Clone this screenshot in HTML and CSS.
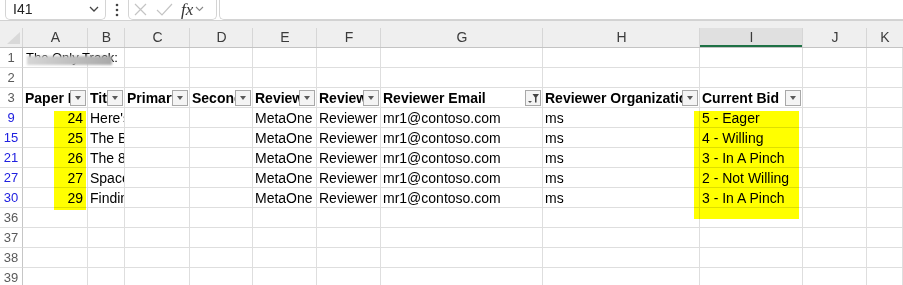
FILE: index.html
```html
<!DOCTYPE html>
<html lang="en">
<head>
    <meta charset="UTF-8">
    <meta name="viewport" content="width=device-width, initial-scale=1.0">
    <title>Reviewer Bids</title>
    <link rel="stylesheet" href="styles.css">
</head>
<body>

<!-- Formula bar -->
<div class="formula-bar">
    <div class="name-box">
        <span>I41</span>
        <svg class="chevron" width="10" height="6" viewBox="0 0 10 6"><path d="M1 1 L5 5 L9 1" fill="none" stroke="#444" stroke-width="1.3"/></svg>
    </div>
    <svg class="bar-dots" width="4" height="14" viewBox="0 0 4 14"><circle cx="2" cy="2" r="1.3"/><circle cx="2" cy="7" r="1.3"/><circle cx="2" cy="12" r="1.3"/></svg>
    <div class="fx-box">
        <svg width="13" height="13" viewBox="0 0 13 13"><path d="M1 1 L12 12 M12 1 L1 12" stroke="#c4c4c4" stroke-width="1.2"/></svg>
        <svg class="check" width="17" height="13" viewBox="0 0 17 13"><path d="M1 7 L6 12 L16 1" fill="none" stroke="#c4c4c4" stroke-width="1.2"/></svg>
        <span class="fx">fx</span>
        <svg width="9" height="6" viewBox="0 0 9 6"><path d="M1 1 L4.5 4.5 L8 1" fill="none" stroke="#888" stroke-width="1.1"/></svg>
    </div>
    <div class="formula-input"></div>
</div>

<!-- Sheet -->
<div class="sheet">
    <div class="corner"><svg width="13" height="12" viewBox="0 0 13 12"><polygon points="13,0 13,12 0,12" fill="#d9d9d9"/></svg></div>
    <div class="col-head"><div class="col-label">A</div></div>
    <div class="col-head"><div class="col-label">B</div></div>
    <div class="col-head"><div class="col-label">C</div></div>
    <div class="col-head"><div class="col-label">D</div></div>
    <div class="col-head"><div class="col-label">E</div></div>
    <div class="col-head"><div class="col-label">F</div></div>
    <div class="col-head"><div class="col-label">G</div></div>
    <div class="col-head"><div class="col-label">H</div></div>
    <div class="col-head"><div class="col-label is-active">I</div></div>
    <div class="col-head"><div class="col-label">J</div></div>
    <div class="col-head"><div class="col-label">K</div></div>

    <!-- row 1 -->
    <div class="row-head">1</div>
    <div class="cell cell-overflow">The Only Track:<span class="blur"></span></div>
    <div class="cell"></div><div class="cell"></div><div class="cell"></div><div class="cell"></div><div class="cell"></div>
    <div class="cell"></div><div class="cell"></div><div class="cell"></div><div class="cell"></div><div class="cell"></div>

    <!-- row 2 -->
    <div class="row-head">2</div>
    <div class="cell"></div><div class="cell"></div><div class="cell"></div><div class="cell"></div><div class="cell"></div><div class="cell"></div>
    <div class="cell"></div><div class="cell"></div><div class="cell"></div><div class="cell"></div><div class="cell"></div>

    <!-- row 3: table headers -->
    <div class="row-head">3</div>
    <div class="cell th"><span class="th-text">Paper ID</span><span class="filter-btn"></span></div>
    <div class="cell th"><span class="th-text">Title</span><span class="filter-btn"></span></div>
    <div class="cell th"><span class="th-text">Primary Subject Area</span><span class="filter-btn"></span></div>
    <div class="cell th"><span class="th-text">Secondary Subject Areas</span><span class="filter-btn"></span></div>
    <div class="cell th"><span class="th-text">Reviewer Name</span><span class="filter-btn"></span></div>
    <div class="cell th"><span class="th-text">Reviewer Type</span><span class="filter-btn"></span></div>
    <div class="cell th"><span class="th-text">Reviewer Email</span>
        <span class="filter-btn is-filtered">
            <svg width="14" height="14" viewBox="0 0 14 14"><path d="M2 10 H6 L4 12 Z" fill="#555"/><path d="M6.5 3 H13 L10.5 6.5 V11.5 H9 V6.5 Z" fill="#444"/></svg>
        </span>
    </div>
    <div class="cell th"><span class="th-text">Reviewer Organization</span><span class="filter-btn"></span></div>
    <div class="cell th"><span class="th-text">Current Bid</span><span class="filter-btn"></span></div>
    <div class="cell"></div><div class="cell"></div>

    <!-- rows 9 .. 30 -->
    <div class="row-head is-filtered">9</div>
    <div class="cell num">24</div><div class="cell">Here's Looking at Data</div><div class="cell"></div><div class="cell"></div>
    <div class="cell">MetaOne</div><div class="cell">Reviewer</div><div class="cell">mr1@contoso.com</div><div class="cell">ms</div>
    <div class="cell">5 - Eager</div><div class="cell"></div><div class="cell"></div>

    <div class="row-head is-filtered">15</div>
    <div class="cell num">25</div><div class="cell">The Best Paper</div><div class="cell"></div><div class="cell"></div>
    <div class="cell">MetaOne</div><div class="cell">Reviewer</div><div class="cell">mr1@contoso.com</div><div class="cell">ms</div>
    <div class="cell">4 - Willing</div><div class="cell"></div><div class="cell"></div>

    <div class="row-head is-filtered">21</div>
    <div class="cell num">26</div><div class="cell">The 8th Wonder</div><div class="cell"></div><div class="cell"></div>
    <div class="cell">MetaOne</div><div class="cell">Reviewer</div><div class="cell">mr1@contoso.com</div><div class="cell">ms</div>
    <div class="cell">3 - In A Pinch</div><div class="cell"></div><div class="cell"></div>

    <div class="row-head is-filtered">27</div>
    <div class="cell num">27</div><div class="cell">Space Travel</div><div class="cell"></div><div class="cell"></div>
    <div class="cell">MetaOne</div><div class="cell">Reviewer</div><div class="cell">mr1@contoso.com</div><div class="cell">ms</div>
    <div class="cell">2 - Not Willing</div><div class="cell"></div><div class="cell"></div>

    <div class="row-head is-filtered">30</div>
    <div class="cell num">29</div><div class="cell">Finding Answers</div><div class="cell"></div><div class="cell"></div>
    <div class="cell">MetaOne</div><div class="cell">Reviewer</div><div class="cell">mr1@contoso.com</div><div class="cell">ms</div>
    <div class="cell">3 - In A Pinch</div><div class="cell"></div><div class="cell"></div>

    <!-- empty rows -->
    <div class="row-head">36</div>
    <div class="cell"></div><div class="cell"></div><div class="cell"></div><div class="cell"></div><div class="cell"></div><div class="cell"></div>
    <div class="cell"></div><div class="cell"></div><div class="cell"></div><div class="cell"></div><div class="cell"></div>
    <div class="row-head">37</div>
    <div class="cell"></div><div class="cell"></div><div class="cell"></div><div class="cell"></div><div class="cell"></div><div class="cell"></div>
    <div class="cell"></div><div class="cell"></div><div class="cell"></div><div class="cell"></div><div class="cell"></div>
    <div class="row-head">38</div>
    <div class="cell"></div><div class="cell"></div><div class="cell"></div><div class="cell"></div><div class="cell"></div><div class="cell"></div>
    <div class="cell"></div><div class="cell"></div><div class="cell"></div><div class="cell"></div><div class="cell"></div>
    <div class="row-head">39</div>
    <div class="cell"></div><div class="cell"></div><div class="cell"></div><div class="cell"></div><div class="cell"></div><div class="cell"></div>
    <div class="cell"></div><div class="cell"></div><div class="cell"></div><div class="cell"></div><div class="cell"></div>

    <!-- highlighter marks drawn over the sheet -->
    <div class="marker marker-ids"></div>
    <div class="marker marker-bids"></div>
</div>

</body>
</html>
```

FILE: styles.css
```css
/* Global styles */

* {
  box-sizing: border-box;
  margin: 0;
  padding: 0;
}

body {
  font-family: "Liberation Sans", Arial, sans-serif;
  font-size: 14px;
  color: #000;
  background-color: #fff;
  width: 903px;
  height: 285px;
  overflow: hidden;
}

/* Formula bar */

.formula-bar {
  display: flex;
  align-items: flex-end;
  height: 20px;
  background-color: #fff;
}

.name-box,
.fx-box,
.formula-input {
  height: 21px;
  border: 1px solid #d4d4d4;
  border-top: none;
  border-radius: 0 0 5px 5px;
  display: flex;
  align-items: center;
}

.name-box {
  width: 101px;
  margin-left: 5px;
  padding: 0 6px 0 7px;
  justify-content: space-between;
  color: #222;
}

.bar-dots {
  fill: #444;
  margin: 0 9px 0 9px;
  align-self: center;
}

.fx-box {
  width: 89px;
  padding-left: 5px;
  gap: 0;
}

.fx-box .check {
  margin-left: 9px;
}

.fx {
  font-family: "Liberation Serif", "Times New Roman", serif;
  font-style: italic;
  font-size: 17px;
  color: #333;
  margin-left: 8px;
  margin-right: 2px;
  line-height: 1;
}

.formula-input {
  flex: 1;
  margin-left: 2px;
  border-right: none;
  border-radius: 0 0 0 5px;
}

/* Sheet grid */

.sheet {
  position: relative;
  display: grid;
  grid-template-columns: 23px 65px 37px 65px 63px 64px 64px 162px 157px 103px 64px 1fr;
  grid-template-rows: 27px;
  grid-auto-rows: 20px;
  border-top: 1px solid #d2d2d2;
}

.corner {
  background-color: #efefef;
  border-bottom: 1px solid #c4c4c4;
  display: flex;
  align-items: flex-end;
  justify-content: flex-end;
  padding: 0 3px 3px 0;
}

.col-head {
  background-color: #efefef;
  border-bottom: 1px solid #c4c4c4;
  padding-top: 7px;
}

.col-label {
  height: 19px;
  line-height: 19px;
  border-left: 1px solid #d6d6d6;
  text-align: center;
  color: #3b3b3b;
  margin-left: -1px;
}

.col-label.is-active {
  background-color: #e0e0e0;
  box-shadow: inset 0 -2px 0 #1e7145;
}

.row-head {
  border-right: 1px solid #c6c6c6;
  border-bottom: 1px solid #e0e0e0;
  text-align: center;
  font-size: 13px;
  line-height: 20px;
  color: #5a5a5a;
}

.row-head.is-filtered {
  color: #2020e0;
}

.cell {
  border-right: 1px solid #dedede;
  border-bottom: 1px solid #dedede;
  padding: 0 2px;
  line-height: 20px;
  white-space: nowrap;
  overflow: hidden;
}

.cell.num {
  text-align: right;
  padding-right: 4px;
}

.cell-overflow {
  position: relative;
  overflow: visible;
  font-size: 13px;
  padding-left: 3px;
  z-index: 1;
}

/* blurred-out track name */
.blur {
  position: absolute;
  left: 4px;
  top: 8px;
  width: 85px;
  height: 9px;
  background: linear-gradient(to right, #d6d6d6, #bcbcbc 60%, #a9a9a9);
  filter: blur(1.2px);
}

/* Table header row */

.th {
  display: flex;
  align-items: center;
  font-weight: bold;
  padding-right: 1px;
}

.th-text {
  flex: 1;
  overflow: hidden;
  white-space: nowrap;
  line-height: 20px;
}

.filter-btn {
  flex: none;
  width: 16px;
  height: 16px;
  border: 1px solid #a8a8a8;
  background-color: #f4f4f4;
  position: relative;
}

.filter-btn::after {
  content: "";
  position: absolute;
  left: 4px;
  top: 5px;
  border-left: 3.5px solid transparent;
  border-right: 3.5px solid transparent;
  border-top: 4px solid #5a5a5a;
}

.filter-btn.is-filtered::after {
  display: none;
}

.filter-btn svg {
  display: block;
}

/* Highlighter marks */

.marker {
  position: absolute;
  background-color: #ffff00;
  mix-blend-mode: multiply;
  pointer-events: none;
}

.marker-ids {
  left: 54px;
  top: 90px;
  width: 32px;
  height: 99px;
}

.marker-bids {
  left: 694px;
  top: 90px;
  width: 105px;
  height: 108px;
}
```
